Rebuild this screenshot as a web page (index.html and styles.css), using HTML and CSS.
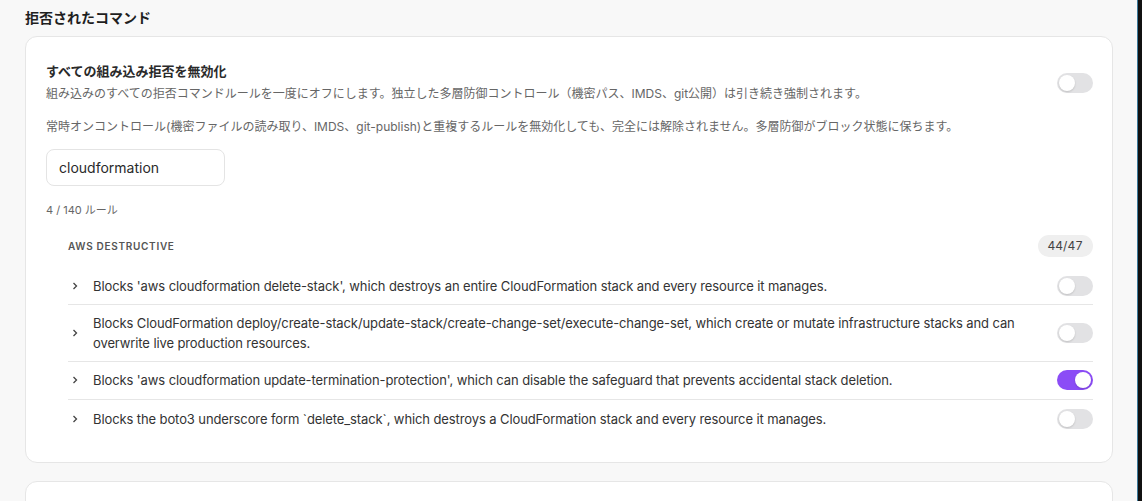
FILE: index.html
```html
<!DOCTYPE html>
<html lang="ja">
<head>
    <meta charset="UTF-8">
    <meta name="viewport" content="width=device-width, initial-scale=1.0">
    <title>拒否されたコマンド</title>
    <link rel="stylesheet" href="styles.css">
</head>
<body>
    <div class="page">
        <h1 class="page-title">拒否されたコマンド</h1>

        <div class="card">
            <div class="master-row">
                <div class="master-text">
                    <h2>すべての組み込み拒否を無効化</h2>
                    <p>組み込みのすべての拒否コマンドルールを一度にオフにします。独立した多層防御コントロール（機密パス、IMDS、git公開）は引き続き強制されます。</p>
                </div>
                <span class="toggle"></span>
            </div>
            <p class="note">常時オンコントロール(機密ファイルの読み取り、IMDS、git-publish)と重複するルールを無効化しても、完全には解除されません。多層防御がブロック状態に保ちます。</p>

            <input class="search" type="text" value="cloudformation">
            <div class="count">4 / 140 ルール</div>

            <div class="group">
                <div class="group-head">
                    <span class="group-name">AWS DESTRUCTIVE</span>
                    <span class="badge">44/47</span>
                </div>
                <ul class="rules">
                    <li class="rule">
                        <svg class="chev" viewBox="0 0 10 10"><path d="M3.5 2 L6.5 5 L3.5 8"/></svg>
                        <span class="rule-text">Blocks 'aws cloudformation delete-stack', which destroys an entire CloudFormation stack and every resource it manages.</span>
                        <span class="toggle"></span>
                    </li>
                    <li class="rule">
                        <svg class="chev" viewBox="0 0 10 10"><path d="M3.5 2 L6.5 5 L3.5 8"/></svg>
                        <span class="rule-text">Blocks CloudFormation deploy/create-stack/update-stack/create-change-set/execute-change-set, which create or mutate infrastructure stacks and can overwrite live production resources.</span>
                        <span class="toggle"></span>
                    </li>
                    <li class="rule">
                        <svg class="chev" viewBox="0 0 10 10"><path d="M3.5 2 L6.5 5 L3.5 8"/></svg>
                        <span class="rule-text">Blocks 'aws cloudformation update-termination-protection', which can disable the safeguard that prevents accidental stack deletion.</span>
                        <span class="toggle on"></span>
                    </li>
                    <li class="rule">
                        <svg class="chev" viewBox="0 0 10 10"><path d="M3.5 2 L6.5 5 L3.5 8"/></svg>
                        <span class="rule-text">Blocks the boto3 underscore form `delete_stack`, which destroys a CloudFormation stack and every resource it manages.</span>
                        <span class="toggle"></span>
                    </li>
                </ul>
            </div>
        </div>

        <div class="card card-next"></div>
    </div>
</body>
</html>
```

FILE: styles.css
```css
* {
    margin: 0;
    padding: 0;
    box-sizing: border-box;
}
html {
    background: #111;
}
body {
    width: 1138px;
    height: 501px;
    overflow: hidden;
    background: #f8f8f8;
    border-right: 1px solid #3d7b9c;
    font-family: Inter, "Noto Sans CJK JP", sans-serif;
    color: #2b2b2b;
}
.page {
    padding: 8px 24px 0 25px;
}
.page-title {
    font-size: 14px;
    font-weight: 700;
    line-height: 20px;
    color: #1f1f1f;
    margin-bottom: 8px;
}
.card {
    background: #fff;
    border: 1px solid #e6e6e6;
    border-radius: 12px;
    padding: 25px 19px 25px 20px;
}
.card-next {
    margin-top: 18px;
    height: 60px;
}
.master-row {
    display: flex;
    align-items: center;
    justify-content: space-between;
}
.master-text h2 {
    font-size: 13px;
    font-weight: 700;
    line-height: 18px;
    color: #2a2a2a;
    margin-bottom: 5px;
}
.master-text p, .note {
    font-size: 12px;
    line-height: 18px;
    color: #666;
}
.note {
    margin-top: 15px;
}
.search {
    display: block;
    margin-top: 13px;
    width: 179px;
    height: 37px;
    padding: 0 12px;
    border: 1px solid #e4e4e4;
    border-radius: 8px;
    font-family: Inter, sans-serif;
    font-size: 14px;
    color: #2a2a2a;
    background: #fff;
}
.count {
    margin-top: 16px;
    font-size: 11px;
    line-height: 16px;
    color: #666;
}
.group {
    margin: 17px 0 0 22px;
}
.group-head {
    display: flex;
    align-items: center;
    justify-content: space-between;
    margin-bottom: 11px;
}
.group-name {
    font-size: 10px;
    font-weight: 600;
    letter-spacing: 0.07em;
    color: #555;
}
.badge {
    background: #efefef;
    border-radius: 11px;
    height: 22px;
    line-height: 22px;
    padding: 0 10px;
    font-size: 12px;
    color: #444;
    font-variant-numeric: tabular-nums;
}
.rules {
    list-style: none;
}
.rule {
    display: flex;
    align-items: center;
    padding: 8px 0;
    border-bottom: 1px solid #e6e6e6;
}
.rule:nth-child(3) {
    padding-bottom: 9px;
}
.rule:last-child {
    border-bottom: none;
    padding-top: 9px;
}
.chev {
    width: 10px;
    height: 10px;
    flex-shrink: 0;
    margin: 0 13px 0 2px;
    fill: none;
    stroke: #444;
    stroke-width: 1.3;
}
.rule-text {
    flex: 1;
    font-size: 13px;
    line-height: 20px;
    letter-spacing: -0.008em;
    color: #333;
    padding-right: 30px;
}
.toggle {
    position: relative;
    flex-shrink: 0;
    width: 36px;
    height: 20px;
    border-radius: 10px;
    background: #e2e2e4;
}
.toggle::after {
    content: "";
    position: absolute;
    top: 2px;
    left: 2px;
    width: 16px;
    height: 16px;
    border-radius: 50%;
    background: #fff;
    box-shadow: 0 1px 2px rgba(0, 0, 0, 0.15);
}
.toggle.on {
    background: #8b4cf6;
}
.toggle.on::after {
    left: 18px;
}
```
